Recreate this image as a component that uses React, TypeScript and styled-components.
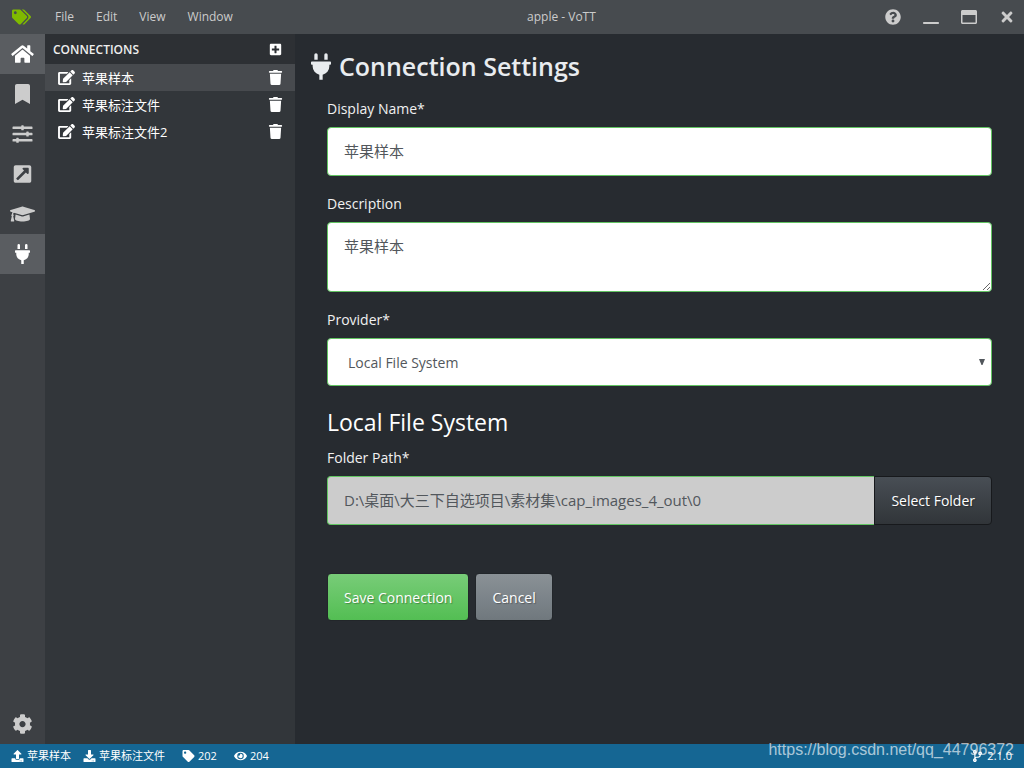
import React from "react";
import styled, { createGlobalStyle } from "styled-components";
import {
  FaHome,
  FaBookmark,
  FaSlidersH,
  FaExternalLinkSquareAlt,
  FaGraduationCap,
  FaPlug,
  FaCog,
  FaTags,
  FaQuestionCircle,
  FaRegWindowMinimize,
  FaRegWindowMaximize,
  FaTimes,
  FaPlusSquare,
  FaEdit,
  FaTrash,
  FaUpload,
  FaDownload,
  FaTag,
  FaEye,
  FaCodeBranch,
} from "react-icons/fa";

const GlobalStyle = createGlobalStyle`
  *, *::before, *::after { box-sizing: border-box; }
  body {
    margin: 0;
    background: #272b30;
    color: #fff;
    font: 14px/24px "Segoe UI", "Open Sans", "Noto Sans CJK SC", sans-serif;
  }
  button, input, textarea, select { font: inherit; color: inherit; margin: 0; }
  button { cursor: pointer; }
  h1, h2, ul { margin: 0; padding: 0; font-weight: inherit; }
  ul { list-style: none; }
  svg { display: block; flex: none; }
`;

const Shell = styled.div`
  display: flex;
  flex-direction: column;
  min-height: 100vh;
`;

const TitleBar = styled.header`
  display: flex;
  align-items: center;
  height: 34px;
  background: #474b4f;
  color: #ccc;
  font-size: 12px;
`;

const MenuBar = styled.nav`
  display: flex;
  align-items: center;
  padding-left: 12px;
`;

const Logo = styled.span`
  color: #7fba00;
  margin-right: 13px;
  svg { width: 19px; height: 16px; }
`;

const MenuButton = styled.button`
  border: 0;
  background: none;
  padding: 0 11px;
`;

const WindowTitle = styled.span`
  flex: 1;
  padding-right: 6px;
  text-align: center;
`;

const WindowControls = styled.div`
  display: flex;
  align-items: center;
  gap: 22px;
  padding-right: 9px;
`;

const IconButton = styled.button<{ $size: number }>`
  display: flex;
  border: 0;
  padding: 0;
  background: none;
  svg { width: ${(p) => p.$size}px; height: ${(p) => p.$size}px; }
`;

const Workspace = styled.div`
  display: flex;
  flex: 1;
`;

const Rail = styled.nav`
  display: flex;
  flex-direction: column;
  flex: none;
  width: 45px;
  background: #3d4044;
`;

const RailLink = styled.a<{ $active?: boolean; $bottom?: boolean }>`
  display: flex;
  align-items: center;
  justify-content: center;
  height: 40px;
  margin-top: ${(p) => (p.$bottom ? "auto" : "0")};
  background: ${(p) => (p.$active ? "#5a5d61" : "transparent")};
  color: ${(p) => (p.$active ? "#fff" : "#ccc")};
  svg { width: 25px; height: 20px; }
`;

const Panel = styled.aside`
  flex: none;
  width: 250px;
  background: #32363a;
`;

const PanelHeader = styled.div`
  display: flex;
  align-items: center;
  justify-content: space-between;
  height: 30px;
  padding: 0 13px 0 8px;
  background: #2d3034;
`;

const PanelTitle = styled.h2`
  padding-top: 2px;
  font-size: 12px;
  font-weight: 600;
  color: #eee;
`;

const ConnectionRow = styled.li<{ $active?: boolean }>`
  display: flex;
  align-items: center;
  height: 27px;
  padding: 0 12px 0 13px;
  background: ${(p) => (p.$active ? "#474a4e" : "transparent")};
  font-size: 13px;
`;

const ConnectionLink = styled.a`
  display: flex;
  flex: 1;
  align-items: center;
  gap: 7px;
  color: #fff;
  text-decoration: none;
  svg { width: 17px; height: 15px; }
`;

const Main = styled.main`
  flex: 1;
  min-width: 0;
  padding: 16px;
`;

const PageTitle = styled.h1`
  display: flex;
  align-items: center;
  gap: 8px;
  margin-bottom: 15px;
  color: #e9ecef;
  font-size: 25px;
  font-weight: 600;
  line-height: 32px;
  svg { width: 20px; height: 27px; }
`;

const Form = styled.form`
  padding: 0 16px;
`;

const Field = styled.div`
  margin-bottom: 16px;
`;

const Label = styled.label`
  display: block;
  margin-bottom: 6px;
  color: #f1f1f1;
`;

const TextInput = styled.input<{ $joined?: boolean }>`
  display: block;
  width: 100%;
  min-width: 0;
  height: 49px;
  padding: 11px 16px 13px;
  border: 1px solid #62c462;
  border-radius: ${(p) => (p.$joined ? "4px 0 0 4px" : "4px")};
  border-right-width: ${(p) => (p.$joined ? "0" : "1px")};
  background: ${(p) => (p.disabled ? "#ccc" : "#fff")};
  color: #52575c;
  font-size: 15px;
`;

const TextArea = styled.textarea`
  display: block;
  width: 100%;
  height: 70px;
  padding: 11px 16px;
  border: 1px solid #62c462;
  border-radius: 4px;
  background: #fff;
  color: #52575c;
  font-size: 15px;
`;

const SelectWrap = styled.div`
  position: relative;
  svg {
    position: absolute;
    right: 7px;
    top: 21px;
    width: 6px;
    height: 6px;
    fill: #52575c;
    pointer-events: none;
  }
`;

const Select = styled.select`
  display: block;
  width: 100%;
  height: 48px;
  padding: 1px 20px 0;
  border: 1px solid #62c462;
  border-radius: 4px;
  appearance: none;
  background: #fff;
  color: #52575c;
`;

const SectionTitle = styled.h2`
  margin: 20px 0 8px;
  font-size: 23px;
  line-height: 32px;
`;

const InputGroup = styled.div`
  display: flex;
`;

const tones = {
  success: "linear-gradient(#78cc78, #62c462 60%, #53be53)",
  secondary: "linear-gradient(#8a9196, #7a8288 60%, #70787d)",
  primary: "linear-gradient(#484e55, #3a3f44 60%, #313539)",
};

const Button = styled.button<{ $tone: keyof typeof tones; $joined?: boolean }>`
  flex: none;
  height: ${(p) => (p.$joined ? "49px" : "48px")};
  padding: ${(p) => (p.$joined ? "0 16px" : "1px 16px 0")};
  border: 1px solid ${(p) => (p.$joined ? "#17191c" : "#22262a")};
  border-radius: ${(p) => (p.$joined ? "0 4px 4px 0" : "4px")};
  background: ${(p) => tones[p.$tone]};
  color: #fff;
  text-shadow: 1px 1px 1px rgba(0, 0, 0, 0.3);
`;

const Actions = styled.div`
  display: flex;
  gap: 6px;
  margin-top: 48px;
`;

const StatusBar = styled.footer`
  position: relative;
  display: flex;
  align-items: center;
  justify-content: space-between;
  height: 24px;
  padding: 0 12px 0 11px;
  background: #156693;
  font-size: 11px;
`;

const StatusGroup = styled.div<{ $gap: number }>`
  display: flex;
  align-items: center;
  gap: ${(p) => p.$gap}px;
`;

const StatusItem = styled.span`
  display: flex;
  align-items: center;
  gap: 3px;
  svg { width: 13px; height: 12px; }
`;

const Watermark = styled.span`
  position: absolute;
  right: 10px;
  bottom: 7px;
  color: rgba(255, 255, 255, 0.65);
  font: 16px/22px "Liberation Sans", Arial, sans-serif;
`;

const rail = [
  { label: "Home", Icon: FaHome, active: true },
  { label: "Tag Editor", Icon: FaBookmark },
  { label: "Project Settings", Icon: FaSlidersH },
  { label: "Export", Icon: FaExternalLinkSquareAlt },
  { label: "Active Learning", Icon: FaGraduationCap },
  { label: "Connections", Icon: FaPlug, active: true },
];

const connections = ["苹果样本", "苹果标注文件", "苹果标注文件2"];

export default function App() {
  return (
    <Shell>
      <GlobalStyle />
      <TitleBar>
        <MenuBar>
          <Logo><FaTags /></Logo>
          {["File", "Edit", "View", "Window"].map((m) => (
            <MenuButton key={m} type="button">{m}</MenuButton>
          ))}
        </MenuBar>
        <WindowTitle>apple - VoTT</WindowTitle>
        <WindowControls>
          <IconButton $size={16} aria-label="Help"><FaQuestionCircle /></IconButton>
          <IconButton $size={16} aria-label="Minimize"><FaRegWindowMinimize /></IconButton>
          <IconButton $size={16} aria-label="Maximize"><FaRegWindowMaximize /></IconButton>
          <IconButton $size={16} aria-label="Close"><FaTimes /></IconButton>
        </WindowControls>
      </TitleBar>
      <Workspace>
        <Rail>
          {rail.map(({ label, Icon, active }) => (
            <RailLink key={label} href="#" aria-label={label} $active={active}><Icon /></RailLink>
          ))}
          <RailLink href="#" aria-label="Settings" $bottom><FaCog /></RailLink>
        </Rail>
        <Panel>
          <PanelHeader>
            <PanelTitle>CONNECTIONS</PanelTitle>
            <IconButton $size={13} aria-label="New connection"><FaPlusSquare /></IconButton>
          </PanelHeader>
          <ul>
            {connections.map((name, i) => (
              <ConnectionRow key={name} $active={i === 0}>
                <ConnectionLink href="#"><FaEdit />{name}</ConnectionLink>
                <IconButton $size={15} aria-label={`Delete ${name}`}><FaTrash /></IconButton>
              </ConnectionRow>
            ))}
          </ul>
        </Panel>
        <Main>
          <PageTitle><FaPlug />Connection Settings</PageTitle>
          <Form onSubmit={(e) => e.preventDefault()}>
            <Field>
              <Label htmlFor="name">Display Name*</Label>
              <TextInput id="name" defaultValue="苹果样本" />
            </Field>
            <Field>
              <Label htmlFor="description">Description</Label>
              <TextArea id="description" defaultValue="苹果样本" />
            </Field>
            <Field>
              <Label htmlFor="provider">Provider*</Label>
              <SelectWrap>
                <Select id="provider">
                  <option>Local File System</option>
                </Select>
                <svg viewBox="0 0 6 6" aria-hidden="true"><path d="M0 0h6L3.5 6h-1z" /></svg>
              </SelectWrap>
            </Field>
            <SectionTitle>Local File System</SectionTitle>
            <Field>
              <Label htmlFor="folder">Folder Path*</Label>
              <InputGroup>
                <TextInput id="folder" $joined disabled value="D:\桌面\大三下自选项目\素材集\cap_images_4_out\0" />
                <Button type="button" $tone="primary" $joined>Select Folder</Button>
              </InputGroup>
            </Field>
            <Actions>
              <Button type="submit" $tone="success">Save Connection</Button>
              <Button type="button" $tone="secondary">Cancel</Button>
            </Actions>
          </Form>
        </Main>
      </Workspace>
      <StatusBar>
        <StatusGroup $gap={17}>
          <StatusGroup $gap={12}>
            <StatusItem><FaUpload />苹果样本</StatusItem>
            <StatusItem><FaDownload />苹果标注文件</StatusItem>
          </StatusGroup>
          <StatusItem><FaTag />202</StatusItem>
          <StatusItem><FaEye />204</StatusItem>
        </StatusGroup>
        <StatusItem><FaCodeBranch />2.1.0</StatusItem>
        <Watermark>https://blog.csdn.net/qq_44796372</Watermark>
      </StatusBar>
    </Shell>
  );
}
